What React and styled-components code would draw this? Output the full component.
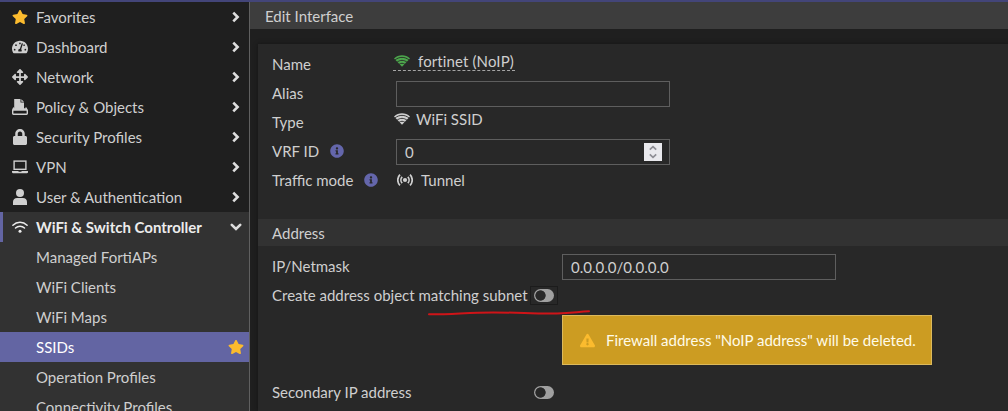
import styled, { createGlobalStyle } from "styled-components";
import {
  FaStar,
  FaTachometerAlt,
  FaArrowsAlt,
  FaLock,
  FaInfoCircle,
  FaExclamationTriangle,
} from "react-icons/fa";

const PolicyIcon = () => (
  <svg width="16" height="16" viewBox="0 0 16 16">
    <path d="M2.200 0h6.300v3.500H12V10H2.200z" fill="currentColor" />
    <path d="M9.300.2L12 2.800H9.300z" fill="currentColor" />
    <path
      d="M1.800 8.500L.7 11.300v3.300c0 .4.200.7.700.7h13.200c.5 0 .7-.3.7-.7v-3.300l-1.600-2.800"
      fill="none"
      stroke="currentColor"
      strokeWidth="1.400"
      strokeLinejoin="round"
    />
    <path d="M1 9.200h13.800l.6 2.600H.6z" fill="currentColor" />
  </svg>
);

const LaptopIcon = () => (
  <svg width="16" height="14" viewBox="0 0 16 14">
    <rect x="2.1" y="1.1" width="11.8" height="8.2" fill="none" stroke="currentColor" strokeWidth="1.4" />
    <path d="M0 11h6.5v.8h3V11H16v1.3c0 .5-.4.9-1 .9H1c-.6 0-1-.4-1-.9z" fill="currentColor" />
  </svg>
);

const UserIcon = () => (
  <svg width="14" height="16" viewBox="0 0 14 16">
    <circle cx="7" cy="4" r="4" fill="currentColor" />
    <path d="M0 16v-3.2C0 10.500 1.800 9 4 9h6c2.200 0 4 1.500 4 3.800V16z" fill="currentColor" />
  </svg>
);

const WifiIcon = () => (
  <svg width="16" height="12" viewBox="0 0 16 12" fill="none" stroke="currentColor" strokeLinecap="round">
    <path d="M.9 4.200C4.900.3 11.100.3 15.100 4.200" strokeWidth="1.500" />
    <path d="M3.500 7c2.500-2.300 6.500-2.300 9 0" strokeWidth="1.500" />
    <circle cx="8" cy="10.200" r="1.500" fill="currentColor" stroke="none" />
  </svg>
);

// solid signal fan, cut into bands by thin arcs
const SignalIcon = ({ gap = "#282828" }) => (
  <svg width="16" height="12" viewBox="0 0 16 12" fill="none">
    <path d="M0 3.400C4.500-.9 11.500-.9 16 3.400L8 11.800z" fill="currentColor" />
    <g stroke={gap} strokeWidth=".9">
      <path d="M1 5C5 1.500 11 1.500 15 5" />
      <path d="M3 7.300c3-2.600 7-2.600 10 0" />
      <path d="M5 9.400c1.800-1.500 4.200-1.500 6 0" />
    </g>
  </svg>
);

const TunnelIcon = () => (
  <svg width="16" height="12" viewBox="0 0 16 12" fill="none" stroke="currentColor" strokeWidth="1.700">
    <circle cx="8" cy="6" r="2.100" fill="currentColor" stroke="none" />
    <path d="M5.200 2.800c-1.700 1.800-1.700 4.600 0 6.400M10.800 2.800c1.700 1.800 1.700 4.600 0 6.400" />
    <path d="M3 .6c-3 3-3 7.800 0 10.800M13 .6c3 3 3 7.800 0 10.800" />
  </svg>
);

const Chevron = ({ open }) => (
  <svg width="12" height="12" viewBox="0 0 12 12" fill="none" stroke="currentColor" strokeWidth="2.600">
    {open ? <path d="M1.800 3.800L6 8l4.200-4.200" strokeLinecap="round" /> : <path d="M3.300 1.700L7.600 6l-4.300 4.300" />}
  </svg>
);

const menu = [
  { label: "Favorites", icon: <FaStar size={16} color="#fbbb2e" /> },
  { label: "Dashboard", icon: <FaTachometerAlt size={16} /> },
  { label: "Network", icon: <FaArrowsAlt size={16} /> },
  { label: "Policy & Objects", icon: <PolicyIcon /> },
  { label: "Security Profiles", icon: <FaLock size={16} /> },
  { label: "VPN", icon: <LaptopIcon /> },
  { label: "User & Authentication", icon: <UserIcon /> },
];

const subMenu = [
  "Managed FortiAPs",
  "WiFi Clients",
  "WiFi Maps",
  "SSIDs",
  "Operation Profiles",
  "Connectivity Profiles",
];

const App = () => {
  return (
    <Page>
      <GlobalStyle />
      <Sidebar>
        {menu.map((item) => (
          <MenuItem key={item.label}>
            <MenuIcon>{item.icon}</MenuIcon>
            <span>{item.label}</span>
            <Arrow><Chevron /></Arrow>
          </MenuItem>
        ))}

        <Group>
          <MenuItem $open>
            <MenuIcon><WifiIcon /></MenuIcon>
            <span>WiFi &amp; Switch Controller</span>
            <Arrow><Chevron open /></Arrow>
          </MenuItem>
          {subMenu.map((label) => (
            <SubItem key={label} $active={label === "SSIDs"}>
              <span>{label}</span>
              {label === "SSIDs" && <FaStar size={16} color="#fbbb2e" />}
            </SubItem>
          ))}
        </Group>
      </Sidebar>

      <Main>
        <Title>Edit Interface</Title>
        <Panel>
          <Section>
            <Row>
              <Label>Name</Label>
              <NameValue>
                <Green><SignalIcon /></Green>
                fortinet (NoIP)
              </NameValue>
            </Row>
            <Row>
              <Label>Alias</Label>
              <Field />
            </Row>
            <Row>
              <Label>Type</Label>
              <TypeValue><SignalIcon /> WiFi SSID</TypeValue>
            </Row>
            <Row>
              <Label>VRF ID <Info size={14} /></Label>
              <Field>
                0
                <Spinner>
                  <svg width="8" height="14" viewBox="0 0 8 14" fill="none" stroke="#8d8d94" strokeWidth="1.700">
                    <path d="M.8 4.600L4 1.600l3.200 3M.8 9.400l3.200 3 3.200-3" />
                  </svg>
                </Spinner>
              </Field>
            </Row>
            <Row>
              <Label>Traffic mode <Info size={14} /></Label>
              <ModeValue><TunnelIcon /> Tunnel</ModeValue>
            </Row>
          </Section>

          <SectionTitle>Address</SectionTitle>
          <Section $address>
            <Row>
              <Label $wide>IP/Netmask</Label>
              <Field>0.0.0.0/0.0.0.0</Field>
            </Row>
            <Row>
              <Label $toggle>
                Create address object matching subnet
                <Underline width="164" height="8" viewBox="0 0 164 8">
                  <path
                    d="M2 5.300C25 5.500 40 3.400 66 3.400S108 5 130 4.500C146 4 152 2.600 162 2.300"
                    fill="none"
                    stroke="#cf1418"
                    strokeWidth="2"
                    strokeLinecap="round"
                  />
                </Underline>
              </Label>
              <ToggleBox $focus><Toggle /></ToggleBox>
            </Row>
            <Alert>
              <FaExclamationTriangle size={15} color="#fbbb2e" />
              Firewall address "NoIP address" will be deleted.
            </Alert>
            <Row>
              <Label $toggle>Secondary IP address</Label>
              <ToggleBox><Toggle /></ToggleBox>
            </Row>
          </Section>
        </Panel>
      </Main>
    </Page>
  );
};

const GlobalStyle = createGlobalStyle`
  * {
    box-sizing: border-box;
  }

  body {
    margin: 0;
    overflow: hidden;
    background: #1f1f1f;
  }
`;

const Page = styled.div`
  display: flex;
  height: 411px;
  overflow: hidden;
  border-top: 2px solid #434579;
  background: #1f1f1f;
  color: #cfcfcf;
  font-family: Lato, sans-serif;
  font-size: 15px;
  line-height: 18px;
  white-space: nowrap;

  svg {
    flex-shrink: 0;
  }
`;

const Sidebar = styled.nav`
  width: 250px;
  flex-shrink: 0;
  border-right: 1px solid #606060;
  overflow: hidden;
`;

const MenuItem = styled.div`
  display: flex;
  align-items: center;
  height: 30px;
  padding: 0 7px 0 ${(props) => (props.$open ? "9px" : "12px")};
  border-left: ${(props) => (props.$open ? "3px solid #6365a3" : "none")};
  color: ${(props) => (props.$open ? "#ececec" : "#cfcfcf")};
  font-weight: ${(props) => (props.$open ? 700 : 400)};
`;

const MenuIcon = styled.div`
  display: flex;
  justify-content: center;
  width: 16px;
  margin-right: 8px;
`;

const Arrow = styled.div`
  display: flex;
  margin-left: auto;
  color: #dedede;
`;

const Group = styled.div`
  background: #323232;
`;

const SubItem = styled.div`
  display: flex;
  align-items: center;
  justify-content: space-between;
  height: 30px;
  padding: 0 5px 0 36px;
  background: ${(props) => (props.$active ? "#6365a3" : "transparent")};
  color: ${(props) => (props.$active ? "#fff" : "#cfcfcf")};
`;

const Main = styled.main`
  display: flex;
  flex-direction: column;
  flex: 1;
  min-width: 0;
`;

const Title = styled.div`
  height: 27px;
  flex-shrink: 0;
  padding: 5px 15px;
  background: #3d3d3d;
`;

const Panel = styled.div`
  flex: 1;
  margin: 15px 0 0 8px;
  background: #282828;
  box-shadow: 0 0 4px #141414;
`;

const Section = styled.div`
  height: ${(props) => (props.$address ? "auto" : "175px")};
  padding: 6px 14px 0;
`;

const SectionTitle = styled.div`
  height: 27px;
  padding: 5px 14px;
  background: #323232;
`;

const Row = styled.div`
  display: flex;
  align-items: center;
  height: 29px;
  padding-top: 1px;
`;

const labelWidth = (props) => {
  if (props.$wide) return "290px";
  if (props.$toggle) return "258px";
  return "124px";
};

const Label = styled.div`
  position: relative;
  display: flex;
  align-items: center;
  flex-shrink: 0;
  gap: 11px;
  width: ${labelWidth};
  margin-bottom: 2px;
`;

const Info = styled(FaInfoCircle)`
  color: #6466ab;
`;

const Value = styled.div`
  display: flex;
  align-items: center;
`;

const NameValue = styled(Value)`
  gap: 8px;
  width: 122px;
  height: 19px;
  margin: -7px 0 0 -3px;
  padding-left: 1px;
  border-bottom: 1px dashed #a5a5a5;
  letter-spacing: 0.12px;
`;

const TypeValue = styled(Value)`
  gap: 6px;
  margin: -8px 0 0 -2px;
`;

const ModeValue = styled(Value)`
  gap: 8px;
  margin: -2px 0 0 1px;
`;

const Green = styled.span`
  display: flex;
  color: #4ca64c;
`;

const Field = styled.div`
  display: flex;
  align-items: center;
  justify-content: space-between;
  width: 274px;
  height: 26px;
  padding: 0 7px 0 8px;
  border: 1px solid #5e5e5e;
`;

const Spinner = styled.div`
  display: flex;
  align-items: center;
  justify-content: center;
  width: 18px;
  height: 18px;
  background: #e9e9ed;
`;

const ToggleBox = styled.div`
  margin-bottom: 2px;
  padding: 2px 3px;
  border: 1px solid ${(props) => (props.$focus ? "#1c1c1c" : "transparent")};
`;

const Toggle = styled.div`
  width: 20px;
  height: 13px;
  border-radius: 7px;
  background: radial-gradient(circle at 6.5px 6.5px, #282828 4.800px, #a0a0a0 5.500px);
`;

// hand drawn mark under the label
const Underline = styled.svg`
  position: absolute;
  top: 23px;
  left: 155px;
`;

const Alert = styled.div`
  display: flex;
  align-items: center;
  gap: 11px;
  width: 370px;
  height: 50px;
  margin: 5px 0 13px 290px;
  padding-left: 17px;
  border: 1px solid #dcb95c;
  background: #cc9c22;
  color: #fffbe8;
`;

export default App;
